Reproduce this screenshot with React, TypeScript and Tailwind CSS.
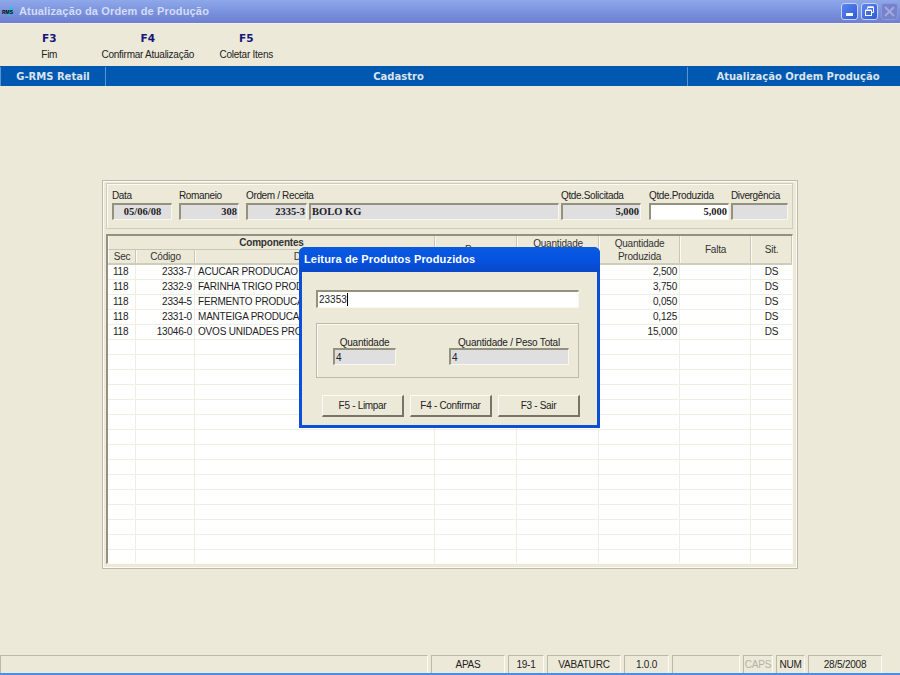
const rows = [
  ["118", "2333-7", "ACUCAR PRODUCAO", "2,500", "DS"],
  ["118", "2332-9", "FARINHA TRIGO PRODUCAO", "3,750", "DS"],
  ["118", "2334-5", "FERMENTO PRODUCAO", "0,050", "DS"],
  ["118", "2331-0", "MANTEIGA PRODUCAO", "0,125", "DS"],
  ["118", "13046-0", "OVOS UNIDADES PRODUCAO", "15,000", "DS"],
];

const emptyRows = Array.from({ length: 15 });

/* sunken windows field */
function Field({ value = "", className = "", white = false, caret = false }: { value?: string; className?: string; white?: boolean; caret?: boolean }) {
  return (
    <div
      className={`h-[17px] border-t-2 border-l-2 border-t-[#94927f] border-l-[#94927f] border-r border-b border-r-[#f8f6ee] border-b-[#f8f6ee] flex items-center px-[1px] overflow-hidden whitespace-nowrap ${white ? "bg-white" : "bg-[#dfdfdf]"} ${className}`}
    >
      {value}
      {caret && <span className="w-px h-[13px] bg-black" />}
    </div>
  );
}

function Labeled({ label, width, value, className = "", white = false }: { label: string; width: string; value: string; className?: string; white?: boolean }) {
  return (
    <div className={`flex flex-col ${width}`}>
      <div className="h-[16px] text-[10px] tracking-[-0.35px] leading-[17px] text-[#222] whitespace-nowrap">{label}</div>
      <Field value={value} white={white} className={`font-['Liberation_Serif',serif] font-bold text-[10.5px] text-[#222] ${className}`} />
    </div>
  );
}

function DialogButton({ label }: { label: string }) {
  return (
    <div className="w-[82px] h-[22px] bg-[#ece9d8] border border-t-[#fbfaf4] border-l-[#fbfaf4] border-r-[#77756a] border-b-[#77756a] border-r-2 border-b-2 flex items-center justify-center text-[10px] tracking-[-0.3px] text-[#222]">
      {label}
    </div>
  );
}

function StatusCell({ label, width, muted = false }: { label?: string; width: string; muted?: boolean }) {
  return (
    <div
      className={`h-[18px] border-t border-l border-t-[#bdb9a6] border-l-[#bdb9a6] border-r border-r-[#fbfaf4] flex items-center justify-center text-[10px] tracking-[-0.2px] ${muted ? "text-[#b5b2a5]" : "text-[#222]"} ${width}`}
    >
      {label}
    </div>
  );
}

function Row({ cells }: { cells?: string[] }) {
  const c = cells ?? ["", "", "", "", ""];
  return (
    <div className="flex h-[15px] bg-white border-b border-b-[#f0eee2] text-[10px] tracking-[-0.2px] leading-[14px] text-[#222]">
      <div className="w-[28px] pl-[5px] border-r border-r-[#f0eee2]">{c[0]}</div>
      <div className="w-[59px] pr-[2px] text-right border-r border-r-[#f0eee2]">{c[1]}</div>
      <div className="w-[240px] pl-[3px] border-r border-r-[#f0eee2] whitespace-nowrap overflow-hidden">{c[2]}</div>
      <div className="w-[82px] border-r border-r-[#f0eee2]" />
      <div className="w-[82px] border-r border-r-[#f0eee2]" />
      <div className="w-[81px] pr-[2px] text-right border-r border-r-[#f0eee2]">{c[3]}</div>
      <div className="w-[71px] border-r border-r-[#f0eee2]" />
      <div className="flex-1 text-center">{c[4]}</div>
    </div>
  );
}

function HeadCell({ className, children }: { className: string; children: React.ReactNode }) {
  return (
    <div className={`bg-[#ece9d8] border-r border-r-[#c9c6b4] border-l border-l-[#fbfaf4] flex items-center justify-center text-center text-[10px] tracking-[-0.2px] leading-[13px] text-[#333] ${className}`}>
      {children}
    </div>
  );
}

export default function App() {
  return (
    <div className="relative w-[900px] h-[675px] overflow-hidden bg-[#ece9d8] font-['Liberation_Sans',sans-serif] flex flex-col">
      {/* Title bar */}
      <div className="h-[23px] bg-gradient-to-b from-[#8ea8ea] via-[#7b93de] to-[#6f7ed0] flex items-center shrink-0">
        <div className="relative w-[16px] h-[14px] ml-[2px] mr-[1px]">
          <svg viewBox="0 0 16 14" className="absolute inset-0 w-[16px] h-[14px]">
            <path d="M9 1 L11 4 L7 11 L5 12 L7 7 Z" fill="#19c8d8" />
          </svg>
          <span className="absolute left-0 top-[5px] text-[5px] leading-[5px] font-bold text-black">RMS</span>
        </div>
        <span className="text-[11px] font-bold tracking-[0.15px] text-[#d4dcf6]">Atualização da Ordem de Produção</span>
        <div className="ml-auto mr-[2px] flex gap-[3px]">
          <div className="w-[17px] h-[17px] rounded-[3px] bg-gradient-to-br from-[#5b86ee] to-[#2f58d8] border border-[#c4d2f6] flex items-end pl-[4px] pb-[3px]">
            <div className="w-[7px] h-[3px] bg-white" />
          </div>
          <div className="w-[17px] h-[17px] rounded-[3px] bg-gradient-to-br from-[#5b86ee] to-[#2f58d8] border border-[#c4d2f6] flex items-center justify-center">
            <svg viewBox="0 0 11 11" className="w-[11px] h-[11px]" fill="none" stroke="#fff">
              <path d="M3.5 3V1.5H9.5V6.5H8" />
              <path d="M3.5 1H9.5" strokeWidth="1.5" />
              <rect x="1.5" y="4.5" width="6" height="5" />
              <path d="M1.5 4.2H7.5" strokeWidth="1.5" />
            </svg>
          </div>
          <div className="w-[17px] h-[17px] rounded-[3px] bg-[#7582cc] border border-[#8c98da] flex items-center justify-center">
            <svg viewBox="0 0 11 11" className="w-[11px] h-[11px]" fill="none" stroke="#a3abde" strokeWidth="2">
              <path d="M1 1L10 10M10 1L1 10" />
            </svg>
          </div>
        </div>
      </div>
      <div className="h-px bg-[#f3f1e6] shrink-0" />

      {/* Toolbar */}
      <div className="h-[42px] flex shrink-0 pt-[6px]">
        {[["F3", "Fim"], ["F4", "Confirmar Atualização"], ["F5", "Coletar Itens"]].map(([key, label]) => (
          <div key={key} className="w-[98.5px] flex flex-col items-center">
            <span className="h-[17px] text-[10.5px] leading-[16px] font-bold text-[#16167a] font-['DejaVu_Sans',sans-serif]">{key}</span>
            <span className="text-[10px] tracking-[-0.25px] leading-[16px] text-[#222] whitespace-nowrap">{label}</span>
          </div>
        ))}
      </div>

      {/* Module bar */}
      <div className="h-[20px] pt-px bg-[#0058b0] flex shrink-0 text-[10px] font-bold text-[#dbe4ee] font-['DejaVu_Sans',sans-serif]">
        <div className="w-[106px] flex items-center justify-center border-l border-l-[#5d93cf] border-r border-r-[#5d93cf]">G-RMS Retail</div>
        <div className="w-[581px] flex items-center justify-center pl-[4px]">Cadastro</div>
        <div className="flex-1 flex items-center justify-center border-l border-l-[#5d93cf] pl-[8px]">Atualização Ordem Produção</div>
      </div>

      {/* Work area */}
      <div className="flex-1 pt-[94px] pl-[102px]">
        <div className="w-[696px] h-[389px] border border-[#bdb9a6] shadow-[inset_1px_1px_0_#fbfaf4,inset_-1px_-1px_0_#fbfaf4] px-[3px] pt-[2px]">
          {/* Header group */}
          <div className="w-[687px] h-[46px] border border-[#cfccba] shadow-[inset_1px_1px_0_#fbfaf4] flex pl-[5px] pt-[3px] gap-[7px]">
            <Labeled label="Data" width="w-[60px]" value="05/06/08" className="justify-center" />
            <Labeled label="Romaneio" width="w-[60px]" value="308" className="justify-end" />
            <div className="flex flex-col w-[313px]">
              <div className="h-[16px] text-[10px] tracking-[-0.35px] leading-[17px] text-[#222]">Ordem / Receita</div>
              <div className="flex gap-[2px] font-['Liberation_Serif',serif] font-bold text-[10.5px] text-[#222]">
                <Field value="2335-3" className="w-[61px] justify-end" />
                <Field value="BOLO KG" className="w-[250px]" />
              </div>
            </div>
            <div className="flex -ml-[5px] gap-[8px]">
              <Labeled label="Qtde.Solicitada" width="w-[80px]" value="5,000" className="justify-end" />
              <div className="flex gap-[2px]">
                <Labeled label="Qtde.Produzida" width="w-[80px]" value="5,000" className="justify-end" white />
                <Labeled label="Divergência" width="w-[57px]" value="" />
              </div>
            </div>
          </div>

          {/* Grid */}
          <div className="w-[687px] mt-[5px] h-[330px] border-t-2 border-l-2 border-t-[#94927f] border-l-[#94927f] border-r border-b border-r-[#fbfaf4] border-b-[#fbfaf4] bg-white overflow-hidden">
            <div className="flex h-[29px] border-b-2 border-b-[#cfccba]">
              <div className="w-[327px] flex flex-col">
                <HeadCell className="h-[15px] font-bold text-[#111] border-b border-b-[#c9c6b4]">Componentes</HeadCell>
                <div className="flex h-[14px]">
                  <HeadCell className="w-[28px]">Sec</HeadCell>
                  <HeadCell className="w-[59px]">Código</HeadCell>
                  <HeadCell className="w-[240px]">Descrição</HeadCell>
                </div>
              </div>
              <HeadCell className="w-[82px]">Peso</HeadCell>
              <HeadCell className="w-[82px]">Quantidade<br />Solicitada</HeadCell>
              <HeadCell className="w-[81px]">Quantidade<br />Produzida</HeadCell>
              <HeadCell className="w-[71px]">Falta</HeadCell>
              <HeadCell className="flex-1">Sit.</HeadCell>
            </div>
            {rows.map((r, i) => (
              <Row key={i} cells={r} />
            ))}
            {emptyRows.map((_, i) => (
              <Row key={i + 5} />
            ))}
          </div>
        </div>
      </div>

      {/* Status bar */}
      <div className="h-[18px] flex gap-[3px] shrink-0">
        <StatusCell width="w-[428px]" />
        <StatusCell label="APAS" width="w-[74px]" />
        <StatusCell label="19-1" width="w-[36px]" />
        <StatusCell label="VABATURC" width="w-[74px]" />
        <StatusCell label="1.0.0" width="w-[45px]" />
        <StatusCell width="w-[68px]" />
        <StatusCell label="CAPS" width="w-[30px]" muted />
        <StatusCell label="NUM" width="w-[29px]" />
        <StatusCell label="28/5/2008" width="w-[74px]" />
      </div>
      <div className="h-[2px] bg-[#4a90e0] shrink-0" />

      {/* Modal dialog */}
      <div className="absolute left-[299px] top-[247px] w-[301px] h-[181px] rounded-t-[6px] bg-[#0a4fd6] flex flex-col px-[3px] pb-[3px]">
        <div className="h-[25px] -mx-[3px] rounded-t-[6px] bg-gradient-to-b from-[#0a5ae0] via-[#0553e0] to-[#0a48c8] flex items-center pl-[5px] text-[11px] font-bold tracking-[0.15px] text-white shrink-0">
          Leitura de Produtos Produzidos
        </div>
        <div className="flex-1 bg-[#ece9d8] flex flex-col px-[14px] pt-[18px]">
          <Field value="23353" white caret className="w-[263px] !h-[18px] text-[10px] text-[#222]" />
          <div className="mt-[15px] w-[263px] h-[55px] border border-[#bdb9a6] shadow-[inset_1px_1px_0_#fbfaf4] flex pl-[16px] pt-[13px] gap-[53px]">
            <div className="w-[63px] flex flex-col">
              <div className="h-[11px] text-[10px] tracking-[-0.2px] leading-[11px] text-center text-[#222]">Quantidade</div>
              <Field value="4" className="text-[10px] text-[#222]" />
            </div>
            <div className="w-[120px] flex flex-col">
              <div className="h-[11px] text-[10px] tracking-[-0.2px] leading-[11px] text-center text-[#222] whitespace-nowrap">Quantidade / Peso Total</div>
              <Field value="4" className="text-[10px] text-[#222]" />
            </div>
          </div>
          <div className="mt-[17px] ml-[6px] flex gap-[6px]">
            <DialogButton label="F5 - Limpar" />
            <DialogButton label="F4 - Confirmar" />
            <DialogButton label="F3 - Sair" />
          </div>
        </div>
      </div>
    </div>
  );
}
